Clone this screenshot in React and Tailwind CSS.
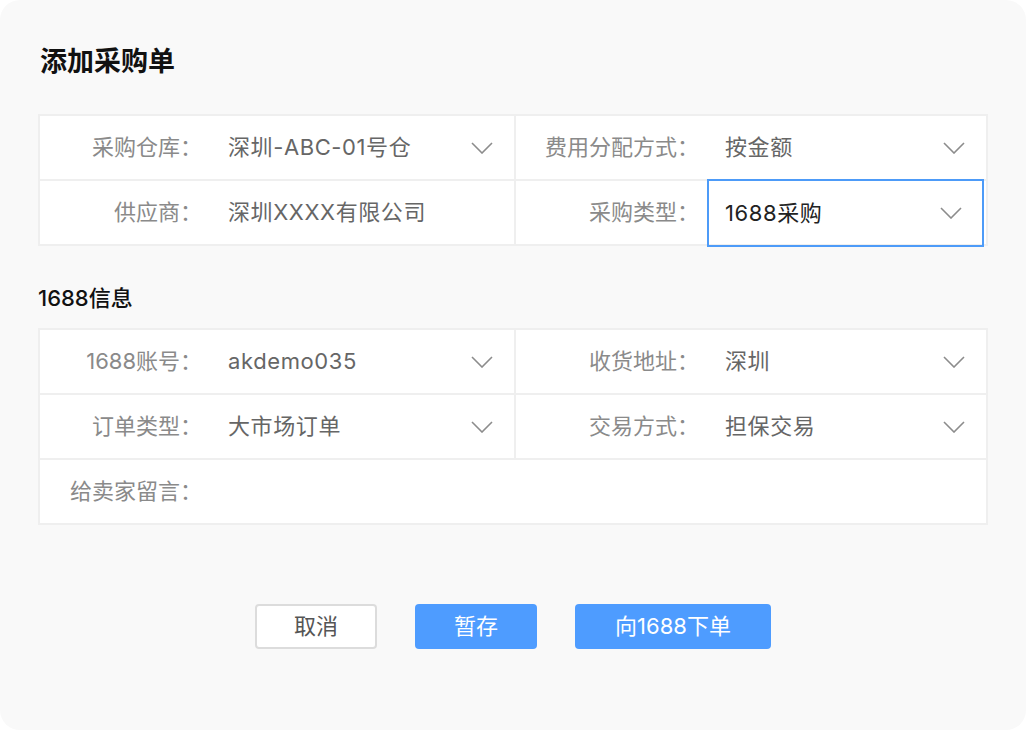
import React from "react";

const FONT = { fontFamily: 'Inter, "Noto Sans CJK SC", sans-serif' };

function Chevron() {
  return (
    <svg width="22" height="12" viewBox="0 0 22 12" fill="none" className="shrink-0">
      <polyline points="1,1 11,11 21,1" stroke="#8c8c8c" strokeWidth="1.6" fill="none" />
    </svg>
  );
}

function Cell({ label, value, select = true, focused = false, labelW }) {
  return (
    <div className="bg-white h-[63px] flex items-center">
      <div
        className="h-full flex items-center justify-end pr-[8px] text-[22px] text-[#8a8a8a] shrink-0"
        style={{ width: labelW }}
      >
        {label}
      </div>
      {focused ? (
        <div className="flex-1 self-stretch -mt-[2px] -mb-[3px] mr-[2px] border-2 border-[#4d9bf8] flex items-center pl-[16px] pr-[20px]">
          <span className="flex-1 text-[22px] tracking-[0.6px] text-[#222]">{value}</span>
          <Chevron />
        </div>
      ) : (
        <div className="flex-1 flex items-center pl-[18px] pr-[21px]">
          <span className="flex-1 text-[22px] tracking-[0.6px] text-[#666]">{value}</span>
          {select && <Chevron />}
        </div>
      )}
    </div>
  );
}

export default function App() {
  return (
    <div className="w-[1026px] h-[730px] bg-white" style={FONT}>
      <div className="w-full h-full bg-[#f9f9f9] rounded-[20px] px-[38px] flex flex-col">
        <h1 className="mt-[44px] text-[27px] leading-[36px] font-semibold text-[#111] pl-[2px]">添加采购单</h1>

        <div className="mt-[34px] bg-[#efefef] p-[2px] grid grid-cols-[474px_1fr] gap-[2px]">
          <Cell label="采购仓库：" value="深圳-ABC-01号仓" labelW={170} />
          <Cell label="费用分配方式：" value="按金额" labelW={191} />
          <Cell label="供应商：" value="深圳XXXX有限公司" select={false} labelW={170} />
          <Cell label="采购类型：" value="1688采购" focused labelW={191} />
        </div>

        <h2 className="mt-[37px] text-[22px] leading-[30px] font-medium text-[#111]">1688信息</h2>

        <div className="mt-[15px] bg-[#efefef] p-[2px] grid grid-cols-[474px_1fr] gap-[2px]">
          <Cell label="1688账号：" value="akdemo035" labelW={170} />
          <Cell label="收货地址：" value="深圳" labelW={191} />
          <Cell label="订单类型：" value="大市场订单" labelW={170} />
          <Cell label="交易方式：" value="担保交易" labelW={191} />
          <div className="col-span-2">
            <Cell label="给卖家留言：" value="" select={false} labelW={170} />
          </div>
        </div>

        <div className="mt-[79px] flex justify-center gap-[38px]">
          <button className="w-[122px] h-[45px] rounded-[4px] border-2 border-[#dcdcdc] bg-white text-[22px] text-[#555]">
            取消
          </button>
          <button className="w-[122px] h-[45px] rounded-[4px] bg-[#4e9cff] text-[22px] text-white">
            暂存
          </button>
          <button className="w-[196px] h-[45px] rounded-[4px] bg-[#4e9cff] text-[22px] text-white">
            向1688下单
          </button>
        </div>
      </div>
    </div>
  );
}
